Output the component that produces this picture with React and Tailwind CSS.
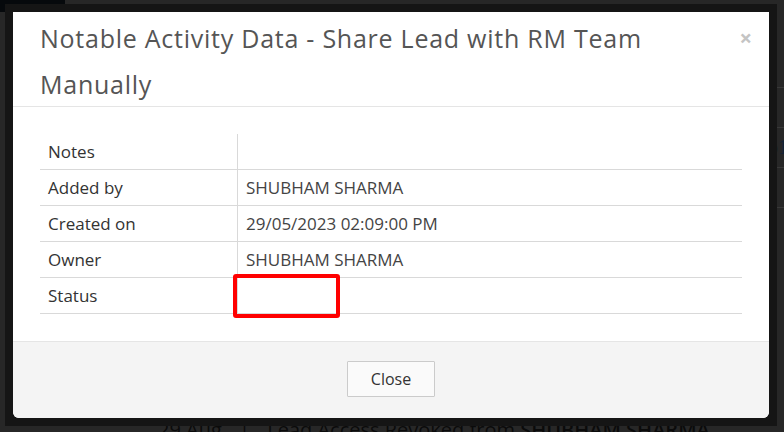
import React from 'react';

const rows = [
  { label: 'Notes', value: '' },
  { label: 'Added by', value: 'SHUBHAM SHARMA' },
  { label: 'Created on', value: '29/05/2023 02:09:00 PM' },
  { label: 'Owner', value: 'SHUBHAM SHARMA' },
  { label: 'Status', value: '', marked: true },
];

function Backdrop() {
  // faded page behind the overlay
  return (
    <div className="absolute inset-0">
      <div className="w-[65px] h-[12px] bg-[#06090c]" />
      <div className="absolute right-0 top-[87px] w-[7px] flex flex-col gap-[39px]">
        <div className="h-px bg-[#383838]" />
        <div className="h-px bg-[#383838]" />
        <div className="h-px bg-[#383838]" />
        <div className="h-px bg-[#383838]" />
      </div>
      <div className="absolute left-[768px] top-[134px] text-[20px] leading-[26px] text-[#132236] font-['Liberation_Serif',serif]">
        o1
      </div>
      <div className="absolute left-[158px] top-[417px] text-[20px] leading-[26px] text-[#0b0b0b] whitespace-nowrap">
        29 Aug <span className="mx-3">|</span> Lead Access Revoked from <b className="font-semibold">SHUBHAM SHARMA</b>
      </div>
    </div>
  );
}

export default function App() {
  return (
    <div className="relative w-[784px] h-[432px] overflow-hidden bg-[#272727] font-['Open_Sans',sans-serif]">
      <Backdrop />
      <div className="absolute left-[5px] top-[4px] w-[772px] h-[422px] bg-[#151515] p-2">
        <div className="flex flex-col h-full bg-white rounded-b-[6px] overflow-hidden">
          <div className="flex justify-between h-[95px] border-b border-[#e5e5e5] pl-[27px] pr-[17px] pt-[3px]">
            <h4 className="text-[25px] leading-[46px] tracking-[0.75px] text-[#555] w-[680px]">
              Notable Activity Data - Share Lead with RM Team Manually
            </h4>
            <button className="mt-[11px] h-[22px] text-[22px] leading-[22px] font-bold text-[#c4c4c4]">×</button>
          </div>
          <div className="p-[27px]">
            <div className="flex flex-col text-[17px]">
              {rows.map((r) => (
                <div key={r.label} className="flex h-[36px] border-b border-[#d9d9d9]">
                  <div className="w-[198px] border-r border-[#d9d9d9] pl-2 flex items-center text-[#333]">
                    {r.label}
                  </div>
                  <div className="relative flex-1 pl-2 flex items-center text-[#444]">
                    {r.value}
                    {r.marked && (
                      <div className="absolute left-[-5px] top-[-4px] w-[107px] h-[44px] border-4 border-[#ff0000] rounded-[3px]" />
                    )}
                  </div>
                </div>
              ))}
            </div>
          </div>
          <div className="flex-1 flex justify-center border-t border-[#e5e5e5] bg-[#f4f4f4] pt-[19px]">
            <button className="w-[88px] h-[36px] bg-[#fafafa] border border-[#cbcbcb] rounded-[1px] text-[16px] text-[#333]">
              Close
            </button>
          </div>
        </div>
      </div>
    </div>
  );
}
